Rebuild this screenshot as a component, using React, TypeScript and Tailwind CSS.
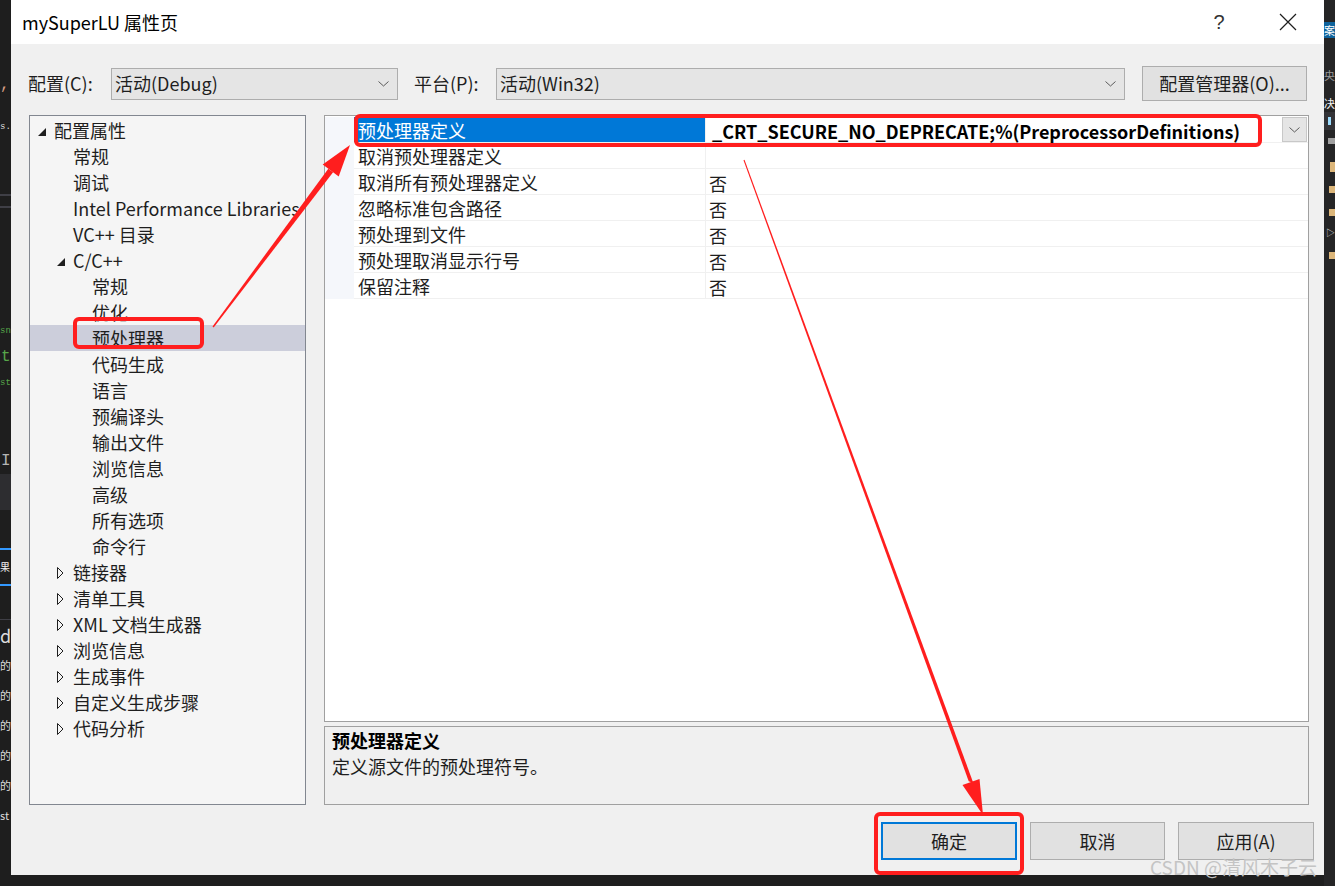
import React from 'react';

type TreeItem = { t: string; l: 0 | 1 | 2; a?: 'open' | 'closed'; sel?: boolean };

const TREE: TreeItem[] = [
  { t: '配置属性', l: 0, a: 'open' },
  { t: '常规', l: 1 },
  { t: '调试', l: 1 },
  { t: 'Intel Performance Libraries', l: 1 },
  { t: 'VC++ 目录', l: 1 },
  { t: 'C/C++', l: 1, a: 'open' },
  { t: '常规', l: 2 },
  { t: '优化', l: 2 },
  { t: '预处理器', l: 2, sel: true },
  { t: '代码生成', l: 2 },
  { t: '语言', l: 2 },
  { t: '预编译头', l: 2 },
  { t: '输出文件', l: 2 },
  { t: '浏览信息', l: 2 },
  { t: '高级', l: 2 },
  { t: '所有选项', l: 2 },
  { t: '命令行', l: 2 },
  { t: '链接器', l: 1, a: 'closed' },
  { t: '清单工具', l: 1, a: 'closed' },
  { t: 'XML 文档生成器', l: 1, a: 'closed' },
  { t: '浏览信息', l: 1, a: 'closed' },
  { t: '生成事件', l: 1, a: 'closed' },
  { t: '自定义生成步骤', l: 1, a: 'closed' },
  { t: '代码分析', l: 1, a: 'closed' },
];

const INDENT = ['pl-[8px]', 'pl-[27px]', 'pl-[46px]'];

const PROPS = [
  { n: '预处理器定义', v: '_CRT_SECURE_NO_DEPRECATE;%(PreprocessorDefinitions)', sel: true },
  { n: '取消预处理器定义', v: '' },
  { n: '取消所有预处理器定义', v: '否' },
  { n: '忽略标准包含路径', v: '否' },
  { n: '预处理到文件', v: '否' },
  { n: '预处理取消显示行号', v: '否' },
  { n: '保留注释', v: '否' },
];

const Chevron = () => (
  <svg width="11" height="6" viewBox="0 0 11 6">
    <polyline points="0.5,0.5 5.5,5 10.5,0.5" fill="none" stroke="#5a5a5a" strokeWidth="1" />
  </svg>
);

const Arrow = ({ open }: { open: boolean }) =>
  open ? (
    <svg width="9" height="9" viewBox="0 0 9 9" className="mt-[4px]">
      <polygon points="8,0 8,8 0,8" fill="#1e1e1e" />
    </svg>
  ) : (
    <svg width="7" height="12" viewBox="0 0 7 12" className="mt-[2px]">
      <polygon points="0.5,0.5 6,6 0.5,11.5" fill="none" stroke="#1e1e1e" strokeWidth="1" />
    </svg>
  );

const Select = ({ value, w }: { value: string; w: string }) => (
  <div className={`${w} h-[32px] bg-[#e5e5e5] border border-[#adadad] flex items-center justify-between pl-[3px] pr-[8px]`}>
    <span>{value}</span>
    <Chevron />
  </div>
);

const LeftStrip = () => (
  <div className="w-[11px] h-full bg-[#1e1e1e] flex flex-col overflow-hidden text-[16px] leading-[26px] font-['Liberation_Mono',monospace]">
    <div className="h-[72px]" />
    <div className="h-[26px] text-[#d69d85]">,</div>
    <div className="h-[16px]" />
    <div className="h-[26px] text-[#dcdcdc] text-[9px]">s.</div>
    <div className="h-[54px]" />
    <div className="h-[2px] bg-[#3f3f46]" />
    <div className="h-[10px]" />
    <div className="h-[2px] bg-[#3f3f46]" />
    <div className="h-[110px]" />
    <div className="h-[26px] text-[#57a64a] text-[9px]">sn</div>
    <div className="h-[26px] text-[#57a64a] pl-[1px]">t</div>
    <div className="h-[26px] text-[#57a64a] text-[9px]">st</div>
    <div className="h-[52px]" />
    <div className="h-[26px] text-[#b4b4b4] pl-[1px]">I</div>
    <div className="h-[36px] bg-[#2d2d30]" />
    <div className="h-[38px]" />
    <div className="h-[38px] border-y-2 border-[#3399ff] text-[#f1f1f1] text-[10px] leading-[34px] font-['Noto_Sans_CJK_SC',sans-serif]">果</div>
    <div className="h-[34px] border-b border-[#3f3f46]" />
    <div className="flex flex-col text-[#dcdcdc] leading-[30px] font-['Noto_Sans_CJK_SC',sans-serif]">
      <span className="text-[18px]">d</span>
      <span className="text-[11px]">的</span>
      <span className="text-[11px]">的</span>
      <span className="text-[11px]">的</span>
      <span className="text-[11px]">的</span>
      <span className="text-[11px]">的</span>
      <span className="text-[11px]">st</span>
    </div>
  </div>
);

const RightStrip = () => (
  <div className="w-[11px] h-full bg-[#252526] flex flex-col overflow-hidden text-[11px] leading-[18px] text-[#f1f1f1] font-['Noto_Sans_CJK_SC',sans-serif]">
    <div className="h-[22px]" />
    <div className="h-[16px] bg-[#0e639c] text-white leading-[16px]">案</div>
    <div className="h-[28px]" />
    <div className="h-[20px] text-[#9a9a9a]">央</div>
    <div className="h-[8px]" />
    <div className="h-[18px]">决</div>
    <div className="h-[18px] bg-[#333337] flex items-center pl-[4px]">
      <div className="w-[3px] h-[8px] bg-[#9cdcfe]" />
    </div>
    <div className="h-[8px]" />
    <div className="h-[6px] ml-[4px] bg-[#a0a0a0]" />
    <div className="h-[18px]" />
    <div className="h-[10px] ml-[6px] bg-[#dcb67a]" />
    <div className="h-[14px]" />
    <div className="h-[7px] ml-[5px] bg-[#dcb67a]" />
    <div className="h-[16px]" />
    <div className="h-[7px] ml-[5px] bg-[#dcb67a]" />
    <div className="h-[10px]" />
    <div className="h-[14px] ml-[2px] text-[#dcdcdc] text-[9px] leading-[14px]">▷</div>
    <div className="h-[12px]" />
    <div className="h-[7px] ml-[5px] bg-[#dcb67a]" />
  </div>
);

const Overlay = () => (
  <svg className="absolute left-0 top-0 pointer-events-none" width="1335" height="886" viewBox="0 0 1335 886">
    <g fill="none" stroke="#ff1e1e" strokeWidth="4">
      <rect x="356" y="116" width="904" height="29" rx="4" />
      <rect x="75" y="319" width="127" height="28" rx="4" />
      <rect x="876" y="814" width="146" height="59" rx="4" />
    </g>
    <g fill="#ff1e1e">
      <polygon points="212.5,326.5 213.7,327.4 333.1,172.3 328.3,168.7" />
      <polygon points="350,145 338.7,176.5 322.7,164.5" />
      <polygon points="743.5,160.2 744.5,159.8 973.3,782.9 968.7,781.2" />
      <polygon points="983,815 979.5,778.9 962.5,785.1" />
    </g>
  </svg>
);

export default function App() {
  return (
    <div className="relative w-[1335px] h-[886px] bg-[#1e1e1e] overflow-hidden flex text-[18px] text-[#1e1e1e] font-['Noto_Sans_CJK_SC',sans-serif]">
      <LeftStrip />

      <div className="w-[1313px] h-[875px] flex flex-col bg-[#f0f0f0]">
        {/* title bar */}
        <div className="h-[44px] bg-white flex items-center pl-[11px] shrink-0">
          <span className="flex-1 text-[18px] text-black">mySuperLU 属性页</span>
          <span className="w-[20px] text-center text-[20px] text-[#333] font-['Liberation_Sans',sans-serif] mr-[50px]">?</span>
          <svg width="18" height="18" viewBox="0 0 18 18" className="mr-[27px]">
            <path d="M1 1 L17 17 M17 1 L1 17" stroke="#1e1e1e" strokeWidth="1.2" />
          </svg>
        </div>

        {/* config row */}
        <div className="h-[35px] mt-[22px] flex items-center pl-[17px] shrink-0">
          <span className="w-[83px]">配置(C):</span>
          <Select value="活动(Debug)" w="w-[287px]" />
          <span className="w-[82px] ml-[16px]">平台(P):</span>
          <Select value="活动(Win32)" w="w-[629px]" />
          <div className="w-[165px] h-[35px] ml-[17px] bg-[#e1e1e1] border border-[#adadad] flex items-center justify-center">
            配置管理器(O)...
          </div>
        </div>

        {/* main */}
        <div className="h-[690px] mt-[14px] flex pl-[18px] shrink-0">
          <div className="w-[277px] h-full bg-[#f5f5f5] border border-[#828790] pt-[1px] overflow-hidden">
            {TREE.map((it, i) => (
              <div
                key={i}
                className={`h-[26px] flex items-center whitespace-nowrap leading-[26px] ${INDENT[it.l]} ${it.sel ? 'bg-[#cccedb]' : ''}`}
              >
                <span className="w-[16px] flex items-center">{it.a && <Arrow open={it.a === 'open'} />}</span>
                <span>{it.t}</span>
              </div>
            ))}
          </div>

          <div className="w-[985px] ml-[18px] flex flex-col">
            <div className="h-[607px] bg-white border border-[#a0a0a0] pt-[1px] flex flex-col">
              {PROPS.map((p, i) => (
                <div key={i} className="h-[26px] flex leading-[23px] shrink-0">
                  <div className="w-[29px] bg-[#f5f7fb]" />
                  <div
                    className={`w-[351px] pl-[4px] pt-[2px] border-b border-[#f0f0f0] whitespace-nowrap ${p.sel ? 'bg-[#0078d7] text-white' : ''}`}
                  >
                    {p.n}
                  </div>
                  <div className="flex-1 border-l border-b border-[#f0f0f0] flex items-center justify-between">
                    <span className={p.sel ? 'pl-[6px] pt-[3px] font-bold text-[18px] text-black' : 'pl-[3px] pt-[3px]'}>{p.v}</span>
                    {p.sel && (
                      <div className="w-[25px] h-[25px] bg-[#e5e5e5] border border-[#c8c8c8] flex items-center justify-center mr-[1px]">
                        <Chevron />
                      </div>
                    )}
                  </div>
                </div>
              ))}
              <div className="w-[29px] h-[1px]" />
            </div>
            <div className="h-[79px] mt-[4px] bg-[#f0f0f0] border border-[#a0a0a0] pl-[7px] leading-[26px]">
              <div className="font-bold text-black">预处理器定义</div>
              <div>定义源文件的预处理符号。</div>
            </div>
          </div>
        </div>

        {/* buttons */}
        <div className="h-[38px] mt-[17px] flex justify-end pr-[10px] gap-[13px] shrink-0">
          <div className="w-[136px] h-full bg-[#e1e1e1] border-2 border-[#0078d7] flex items-center justify-center">确定</div>
          <div className="w-[135px] h-full bg-[#e1e1e1] border border-[#adadad] flex items-center justify-center">取消</div>
          <div className="w-[136px] h-full bg-[#e1e1e1] border border-[#adadad] flex items-center justify-center">应用(A)</div>
        </div>
      </div>

      <RightStrip />

      <Overlay />
      <span className="absolute left-[1150px] top-[853px] text-[19px] text-[#c4c4c4] pointer-events-none">CSDN @清风木子云</span>
    </div>
  );
}
